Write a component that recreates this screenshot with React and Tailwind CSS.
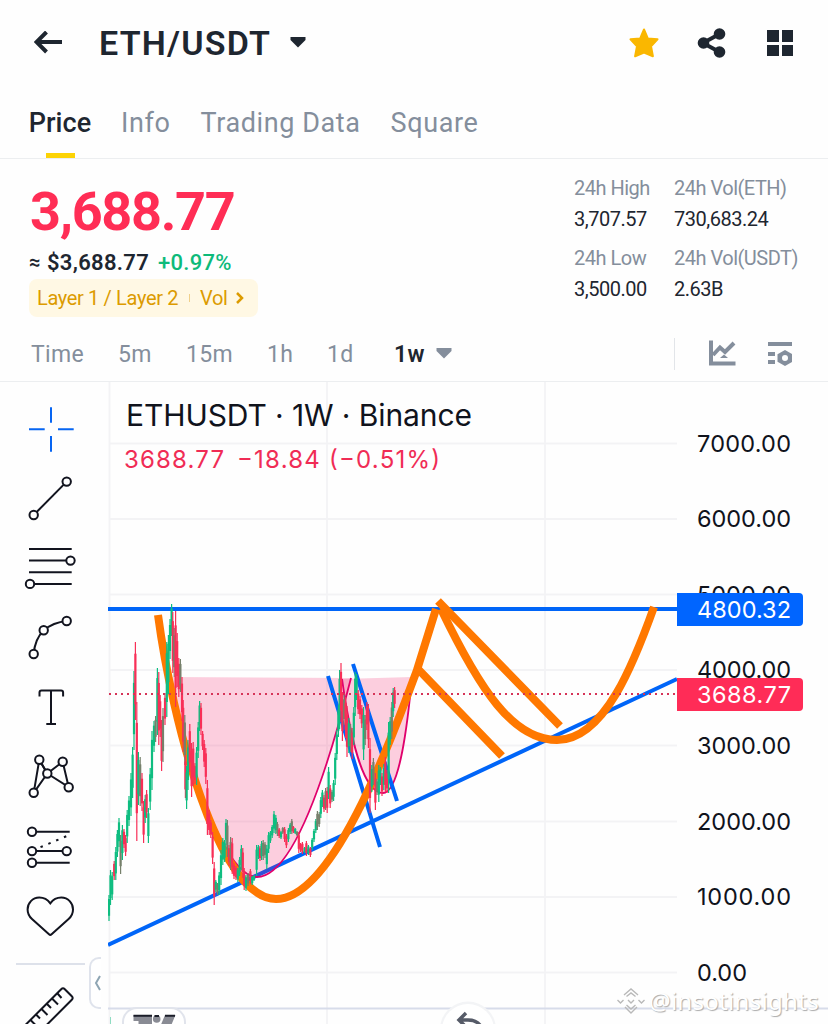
const TABS = ['Info', 'Trading Data', 'Square']

const INTERVALS = [
  { label: '5m', className: 'w-[68px]' },
  { label: '15m', className: 'w-[81px]' },
  { label: '1h', className: 'w-[60px]' },
  { label: '1d', className: 'w-[67px]' },
]

const AXIS = [
  { label: '7000.00', y: 443.5 },
  { label: '6000.00', y: 519 },
  { label: '5000.00', y: 594.5 },
  { label: '4000.00', y: 670 },
  { label: '3000.00', y: 745.5 },
  { label: '2000.00', y: 821.5 },
  { label: '1000.00', y: 897 },
]

// x, high, low, direction (1 up, 0 down, 2 mixed)
const CANDLES = [
  [109, 895, 921, 1], [110.5, 870, 905, 1], [112.2, 872, 900, 1], [114.2, 861, 880, 0],
  [115.8, 847, 880, 1], [117.4, 830, 857, 1], [119, 818, 847, 1], [120.6, 835, 874, 2],
  [122.4, 825, 860, 1], [124, 829, 848, 0], [125.6, 835, 856, 0], [127.2, 810, 843, 1],
  [129, 796, 826, 1], [131, 773, 816, 1], [132.6, 747, 798, 1], [134, 671, 750, 1],
  [135.4, 642, 720, 0], [136.8, 702, 841, 0], [138.4, 752, 805, 1], [140.2, 757, 806, 2],
  [142, 773, 811, 0], [143.6, 801, 843, 0], [145.2, 795, 823, 1], [146.6, 790, 818, 0],
  [148.4, 808, 843, 1], [150.2, 768, 810, 1], [152, 731, 790, 1], [154, 721, 752, 1],
  [155.6, 716, 742, 2], [157.4, 668, 735, 1], [158.8, 672, 745, 0], [160.2, 695, 737, 0],
  [161.6, 720, 771, 0], [163, 708, 762, 2], [165, 693, 725, 0], [166.8, 642, 717, 1],
  [168.4, 635, 694, 1], [170, 619, 659, 1], [171.6, 604, 636, 1], [172.8, 612, 673, 0],
  [174.2, 628, 677, 2], [175.6, 611, 707, 0], [177.2, 633, 687, 0], [178.8, 658, 697, 0],
  [180.4, 659, 692, 2], [182, 677, 721, 0], [183.2, 700, 752, 0], [184.8, 715, 765, 2],
  [185.4, 755, 798, 0], [186.6, 766, 809, 1], [188, 740, 790, 1], [189.8, 724, 772, 0],
  [191.6, 743, 797, 0], [193.2, 742, 786, 0], [195, 763, 784, 0], [196.6, 747, 785, 1],
  [198.2, 722, 758, 1], [199.6, 701, 731, 1], [201, 703, 735, 0], [202.6, 731, 750, 0],
  [204.2, 740, 767, 0], [205.8, 748, 784, 0], [207.4, 780, 835, 0], [209.2, 810, 835, 0],
  [210.8, 820, 838, 0], [212.6, 832, 864, 0], [214.2, 862, 905, 0], [215.8, 880, 892, 1],
  [217.4, 883, 895, 2], [219.2, 872, 895, 1], [221, 850, 885, 1], [222.8, 838, 865, 1],
  [224.6, 840, 862, 1], [226, 819, 845, 1], [227.4, 820, 857, 2], [229, 845, 866, 0],
  [230.6, 837, 870, 2], [232.2, 838, 874, 0], [234, 863, 879, 0], [236, 866, 880, 0],
  [237.8, 868, 882, 1], [239.6, 857, 876, 1], [241.4, 845, 870, 1], [242.8, 848, 878, 0],
  [244.2, 868, 890, 0], [246, 875, 891, 1], [248, 873, 886, 2], [250.4, 869, 884, 0],
  [252.2, 876, 885, 1], [254, 875, 881, 1], [256.6, 845, 876, 1], [258.4, 845, 859, 1],
  [260, 846, 861, 0], [261.6, 841, 860, 1], [263.2, 840, 860, 2], [265, 842, 858, 2],
  [266.8, 845, 869, 1], [268.6, 832, 853, 1], [270.4, 831, 843, 1], [272.2, 825, 838, 1],
  [274, 811, 833, 1], [275.8, 815, 834, 1], [277.4, 822, 836, 2], [279.2, 828, 838, 0],
  [281, 831, 839, 1], [282.8, 827, 834, 2], [284.6, 827, 842, 0], [286.4, 834, 848, 0],
  [288.4, 828, 842, 1], [290.2, 823, 834, 1], [291.8, 819, 834, 2], [293.4, 826, 833, 0],
  [295.2, 828, 834, 1], [297, 831, 836, 2], [298.8, 832, 853, 0], [300.6, 843, 852, 0],
  [302.4, 842, 854, 0], [304.6, 847, 853, 1], [306.4, 841, 856, 0], [308.4, 845, 855, 1],
  [310.4, 847, 857, 0], [312.2, 838, 850, 1], [314, 829, 842, 1], [315.8, 819, 833, 1],
  [317.4, 811, 830, 2], [319.2, 812, 827, 2], [320.8, 797, 818, 1], [322.4, 790, 807, 1],
  [324, 795, 812, 0], [325.6, 788, 810, 2], [327.2, 787, 813, 0], [328.6, 767, 799, 1],
  [330.2, 785, 808, 0], [332, 790, 802, 2], [333.6, 780, 801, 1], [335.2, 753, 785, 1],
  [336.8, 730, 760, 1], [338.4, 705, 737, 1], [339.6, 670, 729, 1], [341, 663, 722, 0],
  [342.4, 692, 741, 0], [344, 695, 725, 2], [345.6, 697, 738, 0], [347, 706, 757, 0],
  [348.8, 718, 753, 1], [350.6, 724, 752, 2], [352.2, 728, 759, 0], [353.8, 707, 745, 1],
  [355.2, 672, 716, 1], [356.6, 674, 700, 1], [358.2, 690, 714, 0], [360, 696, 719, 0],
  [361.8, 705, 728, 0], [363.6, 707, 760, 1], [365.2, 715, 745, 2], [366.8, 702, 730, 0],
  [368.4, 704, 748, 0], [370, 738, 813, 0], [371.8, 765, 792, 1], [373.4, 758, 785, 2],
  [375.4, 773, 810, 0], [377, 779, 795, 2], [378.8, 765, 802, 1], [380.4, 767, 785, 1],
  [382, 773, 796, 0], [383.8, 764, 790, 1], [385.4, 757, 792, 0], [387, 770, 793, 0],
  [388.6, 722, 793, 1], [390.2, 717, 745, 1], [391.8, 702, 739, 2], [393.2, 688, 717, 1],
  [394.6, 687, 708, 0],
]

const CANDLE_COLORS = ['#f82f57', '#0ebd80', '#76806b']

const ToolIcon = ({ children }) => (
  <svg
    className="h-14 w-14 shrink-0"
    viewBox="0 0 56 56"
    fill="none"
    stroke="#12141f"
    strokeWidth="2"
  >
    {children}
  </svg>
)

const Dot = ({ x, y }) => <circle cx={x} cy={y} r="4.2" fill="#fff" />

const Header = () => (
  <header className="flex h-[86px] shrink-0 items-center pl-[34px] pr-[35px]">
    <svg className="h-6 w-7" viewBox="0 0 28 24" fill="none" stroke="#1e2630" strokeWidth="4">
      <path d="M28.500 11H3M12.500 1L2.500 11l10 10" />
    </svg>
    <h1 className="ml-[37px] w-[172px] whitespace-nowrap font-[Roboto] text-[34px] font-semibold tracking-[1.2px] text-[#1e2630]">
      ETH/USDT
    </h1>
    <svg className="-mt-0.5 ml-[19px] h-3 w-4" viewBox="0 0 16 12" fill="#1e2630">
      <path d="M.5 1h15v3L8 11.500.5 4z" />
    </svg>
    <div className="ml-auto flex items-center">
      <svg className="h-[30px] w-[30px]" viewBox="0 0 30 30" fill="#fab700" stroke="#fab700" strokeWidth="2" strokeLinejoin="round">
        <path d="M15 1.500l3.800 8.900 9.700.9-6.500 7 1.900 10-8.900-3.700-8.900 3.700 1.900-10-6.500-7 9.700-.9z" />
      </svg>
      <svg className="ml-[38px] h-[30px] w-[29px]" viewBox="0 0 29 30" fill="#1e2630">
        <path d="M6 15L22.500 6M6 15l16.500 9" stroke="#1e2630" strokeWidth="4" />
        <circle cx="6.500" cy="15" r="5.800" />
        <circle cx="22.500" cy="6" r="5.800" />
        <circle cx="22.500" cy="24" r="5.800" />
      </svg>
      <div className="ml-[41px] grid h-[26px] w-[26px] grid-cols-2 gap-[3px]">
        <span className="bg-[#1e2630]" />
        <span className="bg-[#1e2630]" />
        <span className="bg-[#1e2630]" />
        <span className="bg-[#1e2630]" />
      </div>
    </div>
  </header>
)

const Tabs = () => (
  <nav className="flex h-[73px] shrink-0 gap-[30px] border-b border-[#eceef0] pl-[29px] font-[Roboto] text-[27px] leading-[75px] tracking-[0.6px] text-[#848e9c]">
    <div className="flex w-[62px] flex-col items-center text-[#1e2630]">
      <span className="h-[67px] font-medium tracking-[0.1px]">Price</span>
      <span className="h-[5px] w-[29px] bg-[#fcd305]" />
    </div>
    {TABS.map((tab) => (
      <span key={tab}>{tab}</span>
    ))}
  </nav>
)

const Stat = ({ label, value }) => (
  <div className="whitespace-nowrap text-[20px] leading-[31px] tracking-[-0.5px]">
    <p className="h-[31px] text-[#848e9c]">{label}</p>
    <p className="h-[39px] text-[#1e2630]">{value}</p>
  </div>
)

const Summary = () => (
  <section className="flex h-[167px] shrink-0 justify-between pl-[29px] pr-[30px] font-[Roboto]">
    <div>
      <p className="mt-[20px] h-[66px] pl-px text-[54px] font-bold leading-[66px] tracking-[-1.3px] text-[#ff2d55]">
        3,688.77
      </p>
      <p className="flex h-[34px] items-center text-[22px] font-semibold tracking-[0.3px] text-[#1e2630]">
        <span className="w-[18px] text-[20px]">≈</span>
        <span className="w-[111px]">$3,688.77</span>
        <span className="font-medium text-[#0dba7a]">+0.97%</span>
      </p>
      <div className="flex h-[38px] w-[229px] items-center whitespace-nowrap rounded-lg bg-[#fff8e4] pl-2 text-[20px] tracking-[-0.35px] text-[#dc9b00]">
        Layer 1 / Layer 2
        <span className="ml-[11px] mr-[10px] h-2 w-px bg-[#f0d08a]" />
        Vol
        <svg className="ml-2 h-3 w-2" viewBox="0 0 8 12" fill="none" stroke="#dc9b00" strokeWidth="2.500">
          <path d="M1 1l5 5-5 5" />
        </svg>
      </div>
    </div>
    <div className="mt-[14px] grid h-[140px] grid-cols-[100px_124px] grid-rows-[70px_70px]">
      <Stat label="24h High" value="3,707.57" />
      <Stat label="24h Vol(ETH)" value="730,683.24" />
      <Stat label="24h Low" value="3,500.00" />
      <Stat label="24h Vol(USDT)" value="2.63B" />
    </div>
  </section>
)

const IntervalBar = () => (
  <section className="flex h-14 shrink-0 items-center border-b border-[#eceef0] pl-[31px] pr-9 font-[Roboto] text-[23px] tracking-[0.3px] text-[#848e9c] [&>span]:pt-1">
    <span className="w-[87px]">Time</span>
    {INTERVALS.map(({ label, className }) => (
      <span key={label} className={className}>{label}</span>
    ))}
    <span className="w-[42px] font-semibold text-[#1e2630]">1w</span>
    <svg className="-mt-0.5 h-3 w-4" viewBox="0 0 16 12" fill="#848e9c">
      <path d="M.5 1h15v3L8 11.500.5 4z" />
    </svg>
    <div className="ml-auto flex items-center">
      <span className="h-8 w-px bg-[#e2e5e9]" />
      <svg className="ml-[33px] h-[27px] w-[28px]" viewBox="0 0 28 27" fill="none" stroke="#848e9c" strokeWidth="4">
        <path d="M3 .5v23h24.500" />
        <path d="M5 15l7-7.500 5 4.500 9-9" />
        <path d="M12 18l4-3.500 4 3.500z" fill="#848e9c" stroke="none" />
      </svg>
      <svg className="ml-8 h-[26px] w-6" viewBox="0 0 24 26" fill="#848e9c">
        <path d="M0 1h24v4H0zM0 11h7v4H0zM0 19h7v4H0z" />
        <path fillRule="evenodd" d="M17 9l7.500 4.200v7.600L17 25l-7.500-4.200v-7.600zm0 5a3 3 0 1 0 0 6 3 3 0 0 0 0-6z" />
      </svg>
    </div>
  </section>
)

const Sidebar = () => (
  <aside className="relative flex w-[108px] shrink-0 flex-col gap-[13.7px] pl-[22px] pt-[19px]">
    <ToolIcon>
      <path stroke="#0765f2" d="M29 6.300v15.400M29 35v15.700M7 28.300h15.700M36 28.300h15.700" />
    </ToolIcon>
    <ToolIcon>
      <path d="M11.700 44l33-33.400" />
      <Dot x={44.7} y={10.6} />
      <Dot x={11.7} y={44} />
    </ToolIcon>
    <ToolIcon>
      <path d="M7 8.900h42.700M7 20.600h42M7 32.300h42.700M8 43.900h41.700" />
      <Dot x={48.5} y={20.6} />
      <Dot x={8} y={43.9} />
    </ToolIcon>
    <ToolIcon>
      <path d="M11.700 44C12.500 34 16 26 21.700 20.300 28 15 35 12 44.700 11" />
      <Dot x={44.7} y={11} />
      <Dot x={21.7} y={20.3} />
      <Dot x={11.7} y={44} />
    </ToolIcon>
    <ToolIcon>
      <path d="M17.500 16.500v-4q0-2 2-2h19.600q2 0 2 2v4M29 10.500v33.400M24.300 43.900H34" />
    </ToolIcon>
    <ToolIcon>
      <path d="M11.700 43.800l5.600-33 8 13.700zM25.300 24.500l15.400-11.700 6 25.400z" />
      <path d="M17.300 10.800l8 13.700" />
      <Dot x={17.3} y={10.8} />
      <Dot x={40.7} y={12.8} />
      <Dot x={25.3} y={24.5} />
      <Dot x={11.7} y={43.8} />
      <Dot x={46.7} y={38.2} />
    </ToolIcon>
    <ToolIcon>
      <path d="M10 12.800h37.700M10 32.100h34M10 43.800h37.700" />
      <path d="M18.500 28.200L46 16.500" strokeDasharray="2.500 6" />
      <Dot x={10} y={12.8} />
      <Dot x={10} y={32.1} />
      <Dot x={44.7} y={32.1} />
      <Dot x={10} y={43.8} />
    </ToolIcon>
    <ToolIcon>
      <path d="M28.300 14.400C25.500 10.500 21.500 8.600 17.300 8.600 10.500 8.600 5.600 14 5.600 20.400c0 4 1.600 7 4.400 9.600l17 15.300q1.300 1.200 2.600 0L46.600 30c2.800-2.600 4.400-5.600 4.400-9.600 0-6.400-4.900-11.800-11.700-11.800-4.200 0-8.200 1.900-11 5.800z" />
    </ToolIcon>
    <div className="-ml-1.5 mt-[4px] h-0.5 w-[69px] shrink-0 bg-[#dde1ea]" />
    <svg className="mt-[6px] h-14 w-14 shrink-0 overflow-visible" viewBox="0 0 56 56" fill="none" stroke="#12141f" strokeWidth="2">
      <path d="M39.200 5.200q1.800-1.800 3.600 0l7 7q1.800 1.800 0 3.600L8 57.600-2.600 47z" />
      <path d="M35.500 9.500l4 4.500M30 14.500l6 6M25 20l4 4M19.500 25l6 6M14 30.500l4 4M8.500 36l6 6" />
    </svg>
    <div className="absolute left-[89px] top-[575px] flex h-[52px] w-3 items-center justify-center rounded-l-[10px] border-2 border-r-0 border-[#dfe3ec] bg-white">
      <svg className="h-4 w-1.5 overflow-visible" viewBox="0 0 6 16" fill="none" stroke="#8ea5b3" strokeWidth="2">
        <path d="M7 1L3 8l4 7" />
      </svg>
    </div>
  </aside>
)

const PriceTag = ({ y, color, children }) => (
  <g>
    <path d={`M677 ${y - 16.5}h122q4 0 4 4v25q0 4-4 4H677z`} fill={color} />
    <text x="697" y={y + 8.5} fill="#fff" textLength="94">{children}</text>
  </g>
)

const Chart = () => (
  <svg
    className="h-[642px] w-[720px] shrink-0 font-[Inter] text-[23.5px]"
    viewBox="108 382 720 642"
    fill="none"
  >
    {/* Grid and price axis */}
    <g stroke="#f3f3f5" strokeWidth="1.800">
      <path d="M109.500 382v642M327 382v642M545 382v642" />
      {AXIS.map(({ y }) => (
        <path key={y} d={`M109 ${y}h568`} />
      ))}
      <path d="M109 972.500h568" />
    </g>
    <g fill="#10131c">
      {AXIS.map(({ label, y }) => (
        <text key={label} x="697" y={y + 8} textLength="94">{label}</text>
      ))}
      <text x="697" y="980.500" textLength="50">0.00</text>
    </g>

    {/* Trend lines and curves */}
    <path d="M108 945L677 679" stroke="#0065f8" strokeWidth="4" />
    <path d="M108 609h569" stroke="#0065f8" strokeWidth="4" />
    <g stroke="#e0006c" strokeWidth="1.800">
      <path d="M167 677C185 750 222 877 257 877S325 780 351 678" fill="#f50057" fillOpacity=".19" />
      <path d="M342 679C350 735 362 793 383 793 400 793 408 720 412 677" fill="#f50057" fillOpacity=".19" />
    </g>
    <path d="M328 676l52 171M353 664l44 137" stroke="#0065f8" strokeWidth="4" />
    <g stroke="#ff7800" strokeWidth="8">
      <path d="M158 615C172 720 218 899 276 899 332 899 388 748 417 670L436 609" />
      <path d="M441 609C480 690 513 740 557 740 605 740 635 660 654 607" />
      <path d="M438 601l122 125M417 668l85 88" />
    </g>

    {/* Candles */}
    {CANDLES.map(([x, high, low, dir]) => {
      const range = low - high
      return (
        <g key={x} fill={CANDLE_COLORS[dir]}>
          <rect x={x - 0.6} y={high} width="1.2" height={range} />
          <rect x={x - 1.1} y={high + range * 0.15} width="2.2" height={range * 0.65} />
        </g>
      )
    })}
    <path d="M109 694h568" stroke="#d63357" strokeWidth="2" strokeDasharray="2 4" />

    <PriceTag y={609.5} color="#0065ff">4800.32</PriceTag>
    <PriceTag y={694.5} color="#ff2c57">3688.77</PriceTag>

    {/* Legend */}
    <text x="126" y="426" fill="#10131c" fontSize="30" textLength="346">ETHUSDT · 1W · Binance</text>
    <text x="124" y="467.500" fill="#f02c55" fontSize="24" textLength="100">3688.77</text>
    <text x="237" y="467.500" fill="#f02c55" fontSize="24" textLength="203">−18.84 (−0.51%)</text>

    {/* Bottom pane */}
    <path d="M102 1008.500h726" stroke="#d7dcea" strokeWidth="2" />
    <path d="M110.500 1017v7" stroke="#8fdcc2" />
    <rect x="123" y="1008" width="62" height="40" rx="14" fill="#fff" stroke="#e1e4ec" strokeWidth="2" />
    <path d="M133.500 1015h18.500v12h-13.500v-6h-5zM165 1015h10.500l-5 12H160z" fill="#898b94" />
    <circle cx="156.700" cy="1019" r="3.800" fill="#898b94" />
    <path d="M133.500 1015.700H152M154.500 1016h4.500M165 1015.700h10" stroke="#1a1d28" strokeWidth="2" />
    <circle cx="468" cy="1029.500" r="28" fill="#f3f4f6" />
    <circle cx="468" cy="1030" r="26" fill="#fff" />
    <path d="M466 1013l-7 7 7 7M459 1020h9q8 0 12 5" stroke="#565b68" strokeWidth="3.500" />
  </svg>
)

const Watermark = () => (
  <div className="absolute left-[617px] top-[985px] flex items-center font-['Noto_Sans'] text-[24px] leading-8 text-white [text-shadow:1px_1px_1px_#aaa]">
    <svg className="h-7 w-7" viewBox="0 0 28 28" fill="none" stroke="#b9b9b9" strokeWidth="1.400">
      <path d="M7 8l7-6 7 6M9.500 9.500L14 6l4.500 3.500M8 20l6 6 6-6M9.500 18l4.500 4 4.500-4M11 13l3 3 3-3M.5 13l3 3 3-3M21.500 13l3 3 3-3" />
    </svg>
    <span className="ml-1 tracking-[0.3px]">@insotinsights</span>
  </div>
)

export default function App() {
  return (
    <div className="relative flex h-[1024px] w-[828px] flex-col overflow-hidden bg-[#fefefe]">
      <Header />
      <Tabs />
      <Summary />
      <IntervalBar />
      <main className="flex h-[642px] shrink-0">
        <Sidebar />
        <Chart />
      </main>
      <Watermark />
    </div>
  )
}
